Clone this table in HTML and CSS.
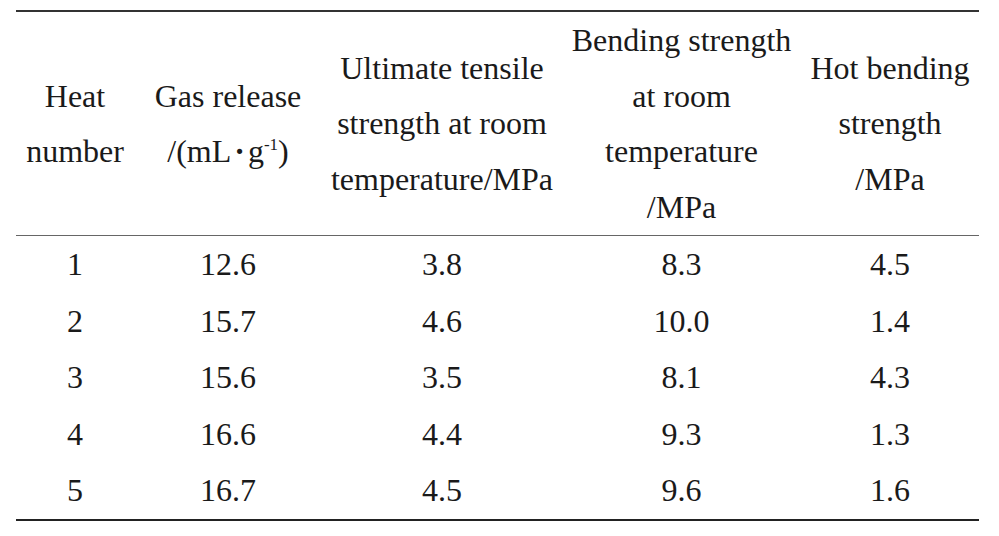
FILE: index.html
```html
<!DOCTYPE html>
<html lang="en">
<head>
<meta charset="utf-8">
<title>Table</title>
<link rel="stylesheet" href="styles.css">
</head>
<body>
<table class="data">
  <colgroup>
    <col class="c1"><col class="c2"><col class="c3"><col class="c4"><col class="c5">
  </colgroup>
  <thead>
    <tr>
      <th>Heat<br>number</th>
      <th>Gas release<br>/(mL<span class="dot">·</span>g<sup>-1</sup>)</th>
      <th>Ultimate tensile<br>strength at room<br>temperature/MPa</th>
      <th>Bending strength<br>at room<br>temperature<br>/MPa</th>
      <th>Hot bending<br>strength<br>/MPa</th>
    </tr>
  </thead>
  <tbody>
    <tr><td>1</td><td>12.6</td><td>3.8</td><td>8.3</td><td>4.5</td></tr>
    <tr><td>2</td><td>15.7</td><td>4.6</td><td>10.0</td><td>1.4</td></tr>
    <tr><td>3</td><td>15.6</td><td>3.5</td><td>8.1</td><td>4.3</td></tr>
    <tr><td>4</td><td>16.6</td><td>4.4</td><td>9.3</td><td>1.3</td></tr>
    <tr><td>5</td><td>16.7</td><td>4.5</td><td>9.6</td><td>1.6</td></tr>
  </tbody>
</table>
</body>
</html>
```
FILE: styles.css
```css
html, body {
  margin: 0;
  padding: 0;
  background: #ffffff;
}

body {
  padding: 10px 0 0 16px;
  font-family: "Liberation Serif", "Times New Roman", serif;
  color: #1a1a1a;
}

.data {
  border-collapse: collapse;
  table-layout: fixed;
  width: 963px;
  font-size: 32px;
}

.c1 { width: 118px; }
.c2 { width: 188px; }
.c3 { width: 240px; }
.c4 { width: 239px; }
.c5 { width: 178px; }

.data thead tr {
  border-top: 2px solid #333333;
  border-bottom: 1.5px solid #666666;
}

.data tbody tr:last-child {
  border-bottom: 2px solid #222222;
}

.data th {
  font-weight: normal;
  text-align: center;
  vertical-align: middle;
  line-height: 55.5px;
  padding: 1px 0 0 0;
  height: 222px;
  white-space: nowrap;
}

.data td {
  text-align: center;
  vertical-align: middle;
  line-height: 56.6px;
  padding: 0;
}

.data sup {
  font-size: 17px;
  line-height: 0;
  vertical-align: 12px;
}

.dot {
  margin: 0 3px;
  font-weight: bold;
}
```
